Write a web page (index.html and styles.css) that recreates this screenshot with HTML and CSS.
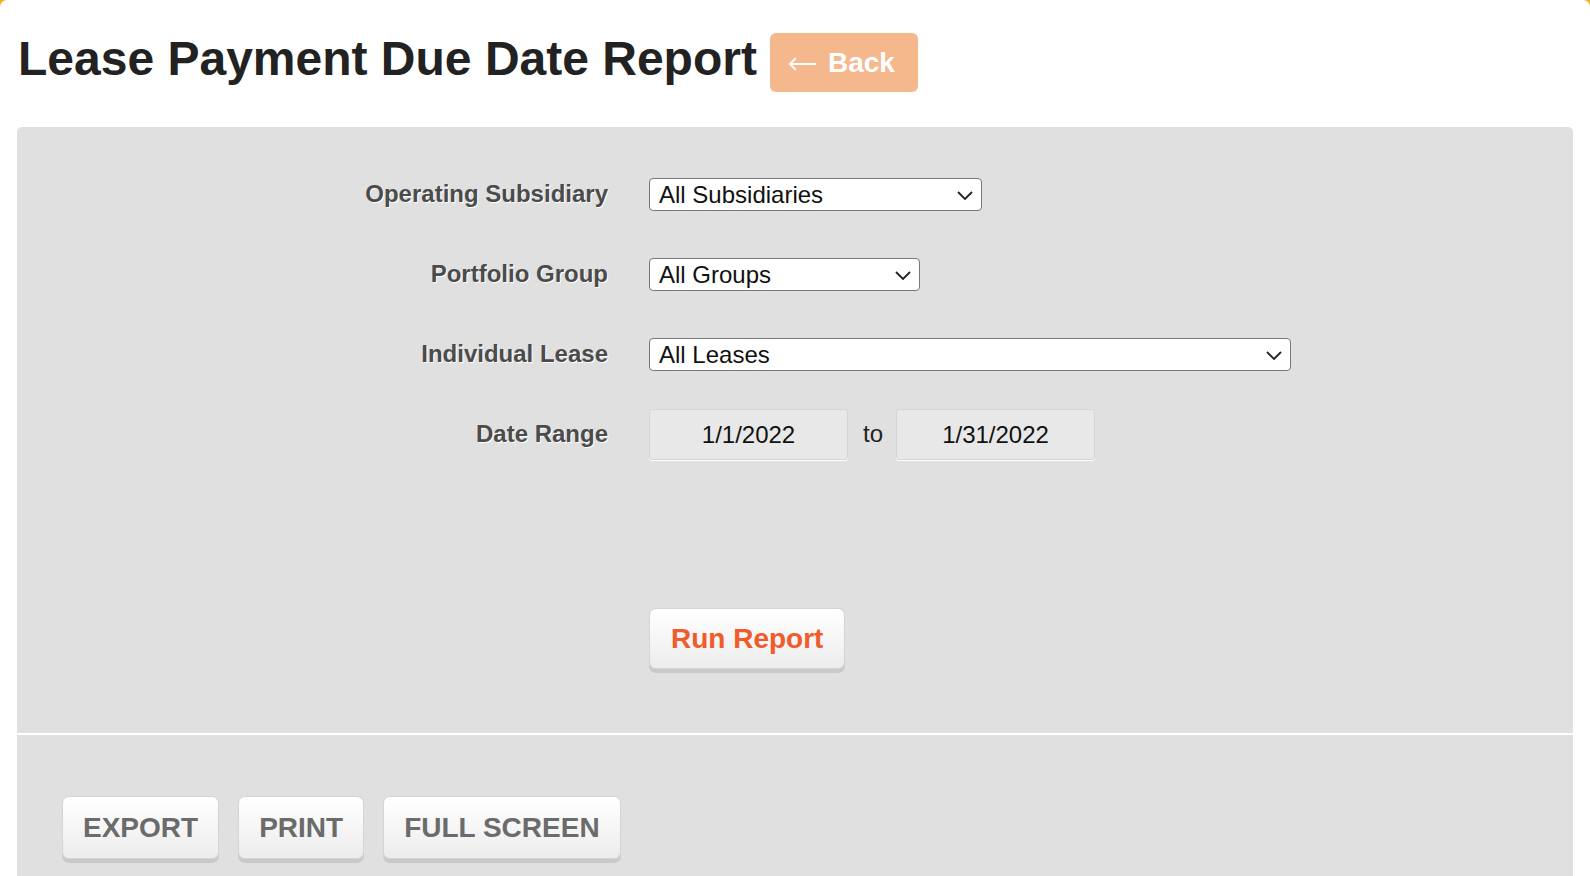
FILE: index.html
```html
<!DOCTYPE html>
<html lang="en">
<head>
	<meta charset="UTF-8">
	<title>Lease Payment Due Date Report</title>
	<link rel="stylesheet" href="styles.css">
</head>
<body>
	<div class="page">
		<div class="head">
			<h1>Lease Payment Due Date Report</h1>
			<a class="back" href="javascript:;"><svg viewBox="0 0 30 14"><path d="M29 7H2M8 1L2 7l6 6"/></svg>Back</a>
		</div>
		<div class="panel">
			<form class="filters">
				<label class="lbl">Operating Subsidiary</label>
				<div class="sel sel-sub">
					<select><option>All Subsidiaries</option></select>
					<svg viewBox="0 0 16 9"><path d="M1 1l7 7 7-7"/></svg>
				</div>
				<label class="lbl">Portfolio Group</label>
				<div class="sel sel-grp">
					<select><option>All Groups</option></select>
					<svg viewBox="0 0 16 9"><path d="M1 1l7 7 7-7"/></svg>
				</div>
				<label class="lbl">Individual Lease</label>
				<div class="sel sel-lease">
					<select><option>All Leases</option></select>
					<svg viewBox="0 0 16 9"><path d="M1 1l7 7 7-7"/></svg>
				</div>
				<label class="lbl">Date Range</label>
				<div class="range">
					<input class="date" type="text" value="1/1/2022">
					<span class="to">to</span>
					<input class="date" type="text" value="1/31/2022">
				</div>
				<div class="run-row">
					<a class="btn btn-run" href="javascript:;">Run Report</a>
				</div>
			</form>
			<div class="tools">
				<a class="btn btn-tool" href="javascript:;">EXPORT</a>
				<a class="btn btn-tool" href="javascript:;">PRINT</a>
				<a class="btn btn-tool" href="javascript:;">FULL SCREEN</a>
			</div>
		</div>
	</div>
</body>
</html>
```

FILE: styles.css
```css
html,body,div,h1,form{margin:0;padding:0;}
html{background:#f6b01e;}
body{font:24px/1.2 "Liberation Sans",Arial,sans-serif;color:#222;}
a{text-decoration:none;}
.page{background:#fff;border-radius:7px 7px 0 0;min-height:100vh;overflow:hidden;}
.head{display:flex;align-items:center;height:59px;padding:33px 18px 0;}
.head h1{align-self:flex-start;margin-top:-2px;font-size:48px;line-height:56px;font-weight:bold;color:#222;}
.back{display:flex;align-items:center;height:59px;margin-left:13px;padding:0 23px 0 18px;background:#f5b88c;color:#fff;font-size:28px;font-weight:bold;border-radius:6px;}
.back svg{width:29px;height:14px;margin:2px 11px 0 0;fill:none;stroke:#fff;stroke-width:2;}
.panel{margin:35px 17px 0;background:#e0e0e0;border-radius:5px 5px 0 0;min-height:760px;}
.filters{display:grid;grid-template-columns:591px 1fr;grid-template-rows:repeat(4,51px) auto;column-gap:41px;row-gap:29px;padding:42px 0 64px;border-bottom:2px solid #fff;}
.lbl{display:flex;align-items:center;justify-content:flex-end;font-weight:bold;color:#4b4b4b;text-shadow:1px 1px 0 #fff;}
.sel{position:relative;align-self:center;height:33px;}
.sel select{width:100%;height:33px;padding:0 0 0 9px;border:1px solid #777;border-radius:4px;background:#fff;color:#111;font:24px "Liberation Sans",Arial,sans-serif;-webkit-appearance:none;appearance:none;}
.sel svg{position:absolute;top:13px;right:9px;width:16px;height:9px;fill:none;stroke:#222;stroke-width:1.8;}
.sel-sub{width:333px;}
.sel-grp{width:271px;}
.sel-lease{width:642px;}
.range{display:flex;align-items:center;}
.date{box-sizing:border-box;width:199px;height:51px;border:1px solid #d5d5d5;border-radius:3px;background:#e8e8e8;box-shadow:0 1px 0 #fff;text-align:center;color:#111;font:24px "Liberation Sans",Arial,sans-serif;}
.to{margin:0 13px 0 15px;color:#222;}
.run-row{grid-column:2;margin-top:119px;}
.btn{display:inline-flex;align-items:center;justify-content:center;box-sizing:border-box;padding:0 21px;border:1px solid #d4d4d4;border-radius:7px;background:linear-gradient(#fff,#ececec);box-shadow:0 4px 0 #c9c9c9;font-size:28px;font-weight:bold;}
.btn-run{height:61px;color:#f15a29;}
.tools{display:flex;gap:19px;padding:61px 45px 40px;}
.btn-tool{height:63px;padding:0 20px;color:#6b6b6b;}
```
